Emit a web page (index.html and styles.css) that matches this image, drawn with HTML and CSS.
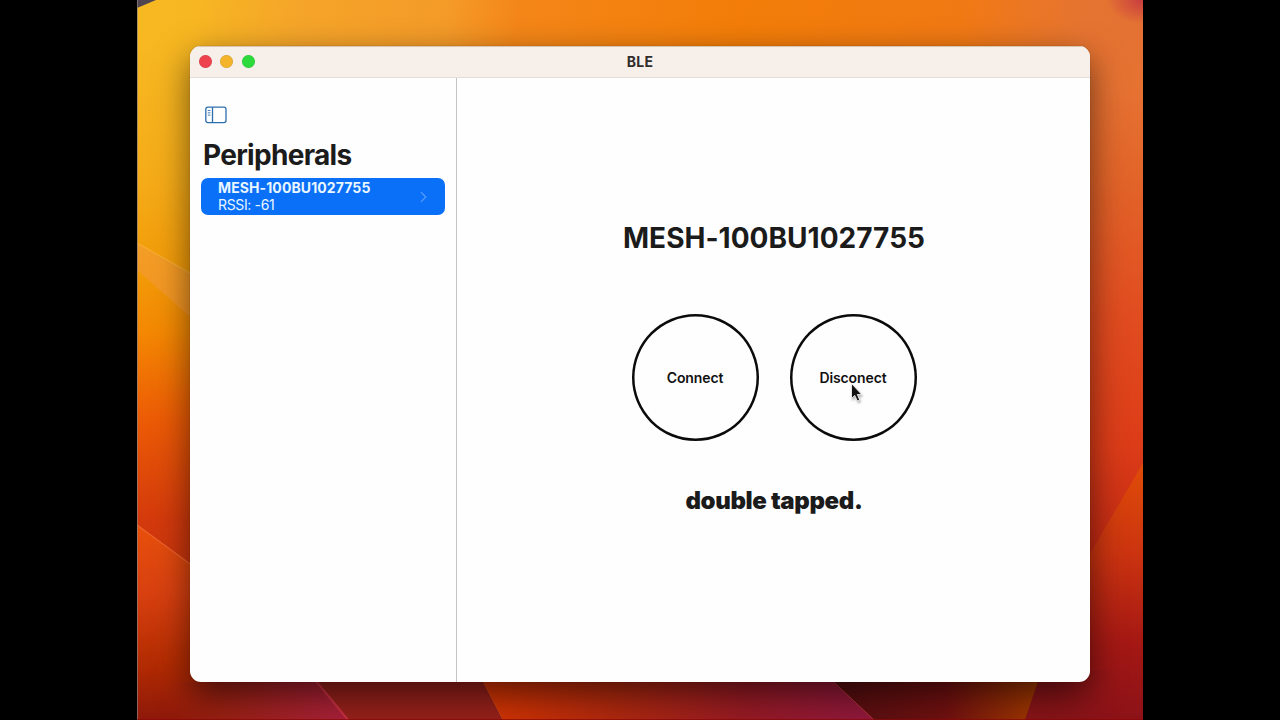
FILE: index.html
```html
<!DOCTYPE html>
<html lang="en">
    <head>
        <meta charset="utf-8">
        <title>BLE</title>
        <link rel="stylesheet" href="styles.css">
    </head>
    <body>
        <div class="desktop">
            <svg class="wallpaper" viewBox="0 0 1006 720" preserveAspectRatio="none">
                <defs>
                    <linearGradient id="top" gradientTransform="rotate(4)">
                        <stop offset="0" stop-color="#f7b922"/>
                        <stop offset="0.06" stop-color="#f7b622"/>
                        <stop offset="0.16" stop-color="#f5a529"/>
                        <stop offset="0.31" stop-color="#f49a28"/>
                        <stop offset="0.38" stop-color="#f48618"/>
                        <stop offset="0.6" stop-color="#f37d08"/>
                        <stop offset="0.82" stop-color="#f17914"/>
                        <stop offset="0.94" stop-color="#e67431"/>
                        <stop offset="1" stop-color="#e27033"/>
                    </linearGradient>
                    <linearGradient id="left" x2="0" y2="1">
                        <stop offset="0" stop-color="#f7b922" stop-opacity="0"/>
                        <stop offset="0.12" stop-color="#f6b41f"/>
                        <stop offset="0.25" stop-color="#f5ab18"/>
                        <stop offset="0.38" stop-color="#f29a08"/>
                        <stop offset="0.46" stop-color="#f48803"/>
                        <stop offset="0.58" stop-color="#ec5c05"/>
                        <stop offset="0.72" stop-color="#d43a0c"/>
                        <stop offset="1" stop-color="#a82410"/>
                    </linearGradient>
                    <linearGradient id="leftLow" x2="0" y2="1">
                        <stop offset="0" stop-color="#e8500c"/>
                        <stop offset="0.35" stop-color="#d84010"/>
                        <stop offset="0.7" stop-color="#b42c02"/>
                        <stop offset="1" stop-color="#8e180a"/>
                    </linearGradient>
                    <linearGradient id="right" x2="0" y2="1">
                        <stop offset="0" stop-color="#e67431" stop-opacity="0"/>
                        <stop offset="0.12" stop-color="#e67232"/>
                        <stop offset="0.25" stop-color="#e26429"/>
                        <stop offset="0.44" stop-color="#e14c20"/>
                        <stop offset="0.62" stop-color="#dc3c18"/>
                        <stop offset="0.8" stop-color="#bc2412"/>
                        <stop offset="0.9" stop-color="#9c1614"/>
                        <stop offset="1" stop-color="#8c1218"/>
                    </linearGradient>
                    <linearGradient id="rightLow" x2="0" y2="1">
                        <stop offset="0" stop-color="#e04c08"/>
                        <stop offset="0.35" stop-color="#cc3410"/>
                        <stop offset="0.7" stop-color="#a41814"/>
                        <stop offset="1" stop-color="#8c1218"/>
                    </linearGradient>
                    <linearGradient id="floor" gradientUnits="userSpaceOnUse" x1="30" x2="210" y1="0" y2="0">
                        <stop offset="0" stop-color="#94200e" stop-opacity="0"/>
                        <stop offset="0.3" stop-color="#982012"/>
                        <stop offset="1" stop-color="#a8203a"/>
                    </linearGradient>
                    <linearGradient id="ember" gradientUnits="userSpaceOnUse" x1="350" x2="720" y1="0" y2="0">
                        <stop offset="0" stop-color="#d23402"/>
                        <stop offset="0.35" stop-color="#ae280e"/>
                        <stop offset="0.7" stop-color="#961a24"/>
                        <stop offset="1" stop-color="#90183a"/>
                    </linearGradient>
                    <linearGradient id="dark" gradientUnits="userSpaceOnUse" x1="700" x2="900" y1="0" y2="0">
                        <stop offset="0" stop-color="#540e10"/>
                        <stop offset="0.55" stop-color="#701010"/>
                        <stop offset="1" stop-color="#a03800"/>
                    </linearGradient>
                    <linearGradient id="floorEnd" gradientUnits="userSpaceOnUse" x1="900" x2="985" y1="0" y2="0">
                        <stop offset="0" stop-color="#861418"/>
                        <stop offset="1" stop-color="#861418" stop-opacity="0"/>
                    </linearGradient>
                    <radialGradient id="corner" cx="1" cy="0" r="1">
                        <stop offset="0" stop-color="#c83c40"/>
                        <stop offset="1" stop-color="#c83c40" stop-opacity="0"/>
                    </radialGradient>
                </defs>
                <rect width="1006" height="720" fill="url(#top)"/>
                <rect x="946" width="60" height="720" fill="url(#right)"/>
                <path d="M0 0H60V720H0z" fill="url(#left)"/>
                <path d="M0 243L60 277V323L0 270z" fill="#f49a40" opacity="0.5"/>
                <path d="M0 243L60 277" stroke="#fbb43c" stroke-width="1.2" opacity="0.7"/>
                <path d="M0 525L60 569L200 640V720H0z" fill="url(#leftLow)"/>
                <path d="M0 525L60 569" stroke="#f8703a" stroke-width="1.2" opacity="0.7"/>
                <path d="M1006 463L946 566L860 640V720H1006z" fill="url(#rightLow)"/>
                <path d="M30 682H180L211 720H30z" fill="url(#floor)"/>
                <path d="M170 670H340L366 720H211z" fill="#94201a"/>
                <path d="M340 670H684L737 720H366z" fill="url(#ember)"/>
                <path d="M684 670H905L888 720H737z" fill="url(#dark)"/>
                <path d="M905 670H985V720H888z" fill="url(#floorEnd)"/>
                <path d="M170 670L211 720" stroke="#c83040" stroke-width="2"/>
                <path d="M684 670L737 720" stroke="#b02c3c" stroke-width="1"/>
                <rect x="970" width="36" height="24" fill="url(#corner)"/>
                <path d="M0 0H19L0 8z" fill="#504450"/>
                <path d="M0.5 0V720" stroke="#8c8480" opacity="0.7"/>
                <path d="M0 719.5H1006" stroke="#8c0808" opacity="0.7"/>
            </svg>

            <div class="window">
                <div class="titlebar">
                    <div class="lights">
                        <div class="light red"></div>
                        <div class="light yellow"></div>
                        <div class="light green"></div>
                    </div>
                    <div class="app-name">BLE</div>
                </div>
                <div class="content">
                    <div class="sidebar">
                        <svg class="toggle" width="22" height="18" viewBox="0 0 22 18" fill="none" stroke="#2c6fae">
                            <rect x="0.8" y="1.2" width="20.2" height="15.4" rx="2" stroke-width="1.3"/>
                            <path d="M7.5 1.2V16.6" stroke-width="1.3"/>
                            <path d="M2.8 4.5H5.4M2.8 6.8H5.4M2.8 9.1H5.4" stroke-width="0.9"/>
                        </svg>
                        <h1>Peripherals</h1>
                        <div class="device">
                            <div class="device-text">
                                <div class="device-name">MESH-100BU1027755</div>
                                <div class="rssi">RSSI: -61</div>
                            </div>
                            <svg class="chevron" width="7" height="12" viewBox="0 0 7 12" fill="none" stroke="#5a9cfb" stroke-width="1.2">
                                <path d="M1 1.2L5.8 6L1 10.8"/>
                            </svg>
                        </div>
                    </div>
                    <div class="detail">
                        <h2>MESH-100BU1027755</h2>
                        <div class="buttons">
                            <div class="circle connect">Connect</div>
                            <div class="circle disconnect">Disconect
                                <svg class="cursor" width="14" height="22" viewBox="0 0 14 22">
                                    <path d="M1.5 1.5V16.4L4.8 13.4L7.3 19L9.7 18L7.3 12.5H11.7z" fill="#111" stroke="#fff" stroke-width="0.8"/>
                                </svg>
                            </div>
                        </div>
                        <div class="status">double tapped.</div>
                    </div>
                </div>
            </div>
        </div>
    </body>
</html>
```
FILE: styles.css
```css
body{
    margin: 0px;
    background: #000000;
    font-family: Inter, "Liberation Sans", sans-serif;
    color: #1b1b1b;
    overflow: hidden;
}
.desktop{
    position: relative;
    box-sizing: border-box;
    width: 1006px;
    height: 720px;
    margin-left: 137px;
    padding: 46px 53px 38px;
    overflow: hidden;
}
/* wallpaper lies behind the window */
.wallpaper{
    position: absolute;
    top: 0;
    left: 0;
    width: 1006px;
    height: 720px;
}
.window{
    position: relative;
    display: flex;
    flex-direction: column;
    width: 900px;
    height: 636px;
    border-radius: 11px;
    background: #fefefe;
    overflow: hidden;
    box-shadow: 0 0 1px 0 rgba(60,30,0,0.6), 0 12px 34px rgba(0,0,0,0.55);
}
.titlebar{
    display: grid;
    grid-template-columns: 1fr auto 1fr;
    align-items: center;
    box-sizing: border-box;
    height: 32px;
    padding-bottom: 1px;
    background: #f7f0ea;
    border-top: 1px solid #d9c5ae;
    border-bottom: 1px solid #e2dedb;
}
.lights{
    display: flex;
    gap: 8.5px;
    padding-left: 8.5px;
}
.light{
    width: 13.2px;
    height: 13.2px;
    border-radius: 50%;
    box-shadow: inset 0 0 0 0.5px rgba(0,0,0,0.14);
}
.red{ background: #ee424e;}
.yellow{ background: #f3b42c;}
.green{ background: #2cdb3b;}
.app-name{
    font-size: 14px;
    font-weight: 700;
    line-height: 28px;
    letter-spacing: 0.2px;
    color: #302d2b;
}
.content{
    display: flex;
    flex: 1;
}
.sidebar{
    box-sizing: border-box;
    width: 267px;
    padding: 28px 11px 0 11px;
    border-right: 1px solid #c4c4c4;
}
.toggle{
    display: block;
    margin-left: 4px;
}
h1{
    margin: 14px 0 6px 2px;
    font-size: 28px;
    line-height: 34px;
    font-weight: 700;
    letter-spacing: -0.7px;
}
.device{
    display: flex;
    align-items: center;
    justify-content: space-between;
    box-sizing: border-box;
    width: 244px;
    height: 37px;
    padding: 0 18px 0 17px;
    border-radius: 7px;
    background: #0a70f8;
    color: #e8f6ff;
    font-size: 14px;
    line-height: 17px;
}
.device-text{
    padding-bottom: 2px;
}
.device-name{
    font-weight: 700;
    letter-spacing: 0.1px;
}
.rssi{
    letter-spacing: -0.35px;
}
.detail{
    display: flex;
    flex: 1;
    flex-direction: column;
    align-items: center;
    padding-left: 1px;
}
h2{
    margin: 142px 0 0;
    font-size: 28px;
    line-height: 36px;
    font-weight: 700;
    letter-spacing: 0.03px;
    white-space: nowrap;
}
.buttons{
    display: flex;
    gap: 31px;
    margin-top: 58px;
}
.circle{
    position: relative;
    display: flex;
    align-items: center;
    justify-content: center;
    width: 127px;
    height: 127px;
    border-radius: 50%;
    box-shadow: inset 0 0 0 2.5px #0b0b0b;
    font-size: 14px;
    font-weight: 600;
    letter-spacing: -0.12px;
    color: #111111;
}
.cursor{
    position: absolute;
    left: 60px;
    top: 68px;
    filter: drop-shadow(1px 2px 1px rgba(0,0,0,0.3));
}
.status{
    margin-top: 45px;
    font-size: 24px;
    line-height: 30px;
    font-weight: 900;
    letter-spacing: -0.35px;
}
```
